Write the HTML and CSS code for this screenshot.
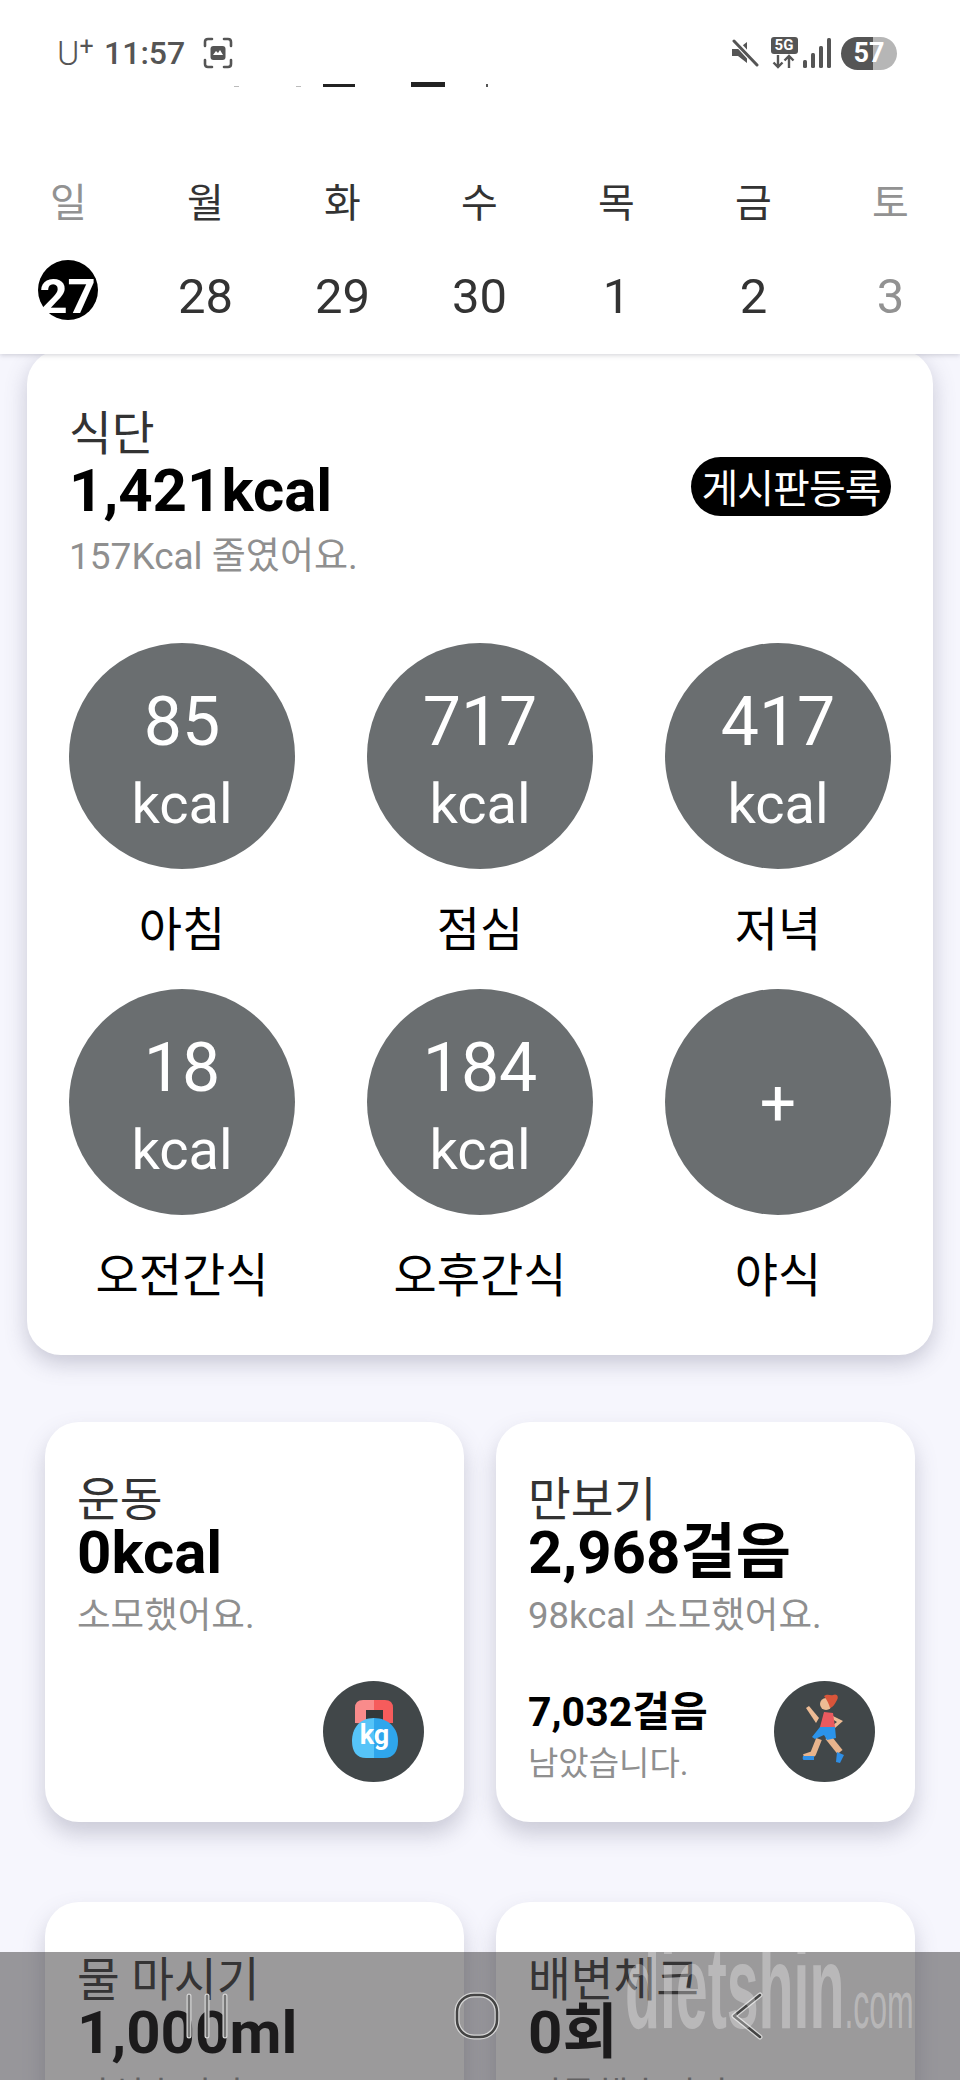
FILE: index.html
```html
<!DOCTYPE html>
<html lang="ko">
<head>
    <meta charset="UTF-8">
    <meta name="viewport" content="width=device-width, initial-scale=1.0">
    <title>식단</title>
    <link rel="stylesheet" href="styles.css">
</head>
<body>
    <header class="top">
        <div class="status-bar">
            <div class="status-left">
                <span class="carrier">U<sup>+</sup></span>
                <span class="clock">11:57</span>
                <svg class="shot-icon" width="30" height="32" viewBox="0 0 30 32">
                    <path d="M2 9V5q0-3 3-3h4M21 2h4q3 0 3 3v4M28 23v4q0 3-3 3h-4M9 30H5q-3 0-3-3v-4" fill="none" stroke="#555" stroke-width="2.6" stroke-linecap="round"/>
                    <rect x="7.5" y="9" width="15" height="14" rx="3" fill="#555"/>
                    <path d="M10 18l3-4 2 2 2-3 3 5z" fill="#fff"/>
                </svg>
            </div>
            <div class="status-right">
                <svg width="28" height="28" viewBox="0 0 28 28">
                    <path d="M1 10h6l9-7v21l-9-7H1z" fill="#555"/>
                    <path d="M4 2l22 24" stroke="#fff" stroke-width="6"/>
                    <path d="M3 2l23 24" stroke="#555" stroke-width="3" stroke-linecap="round"/>
                </svg>
                <div class="net">
                    <span class="net-label">5G</span>
                    <svg width="26" height="15" viewBox="0 0 26 15">
                        <path d="M7 1v12M2.500 8.500L7 13l4.500-4.500M18 14V2M13.500 6.500L18 2l4.500 4.500" fill="none" stroke="#555" stroke-width="2.400"/>
                    </svg>
                </div>
                <svg width="28" height="30" viewBox="0 0 28 30">
                    <rect x="0" y="22" width="4" height="8" rx="1.500" fill="#555"/>
                    <rect x="8" y="15" width="4" height="15" rx="1.500" fill="#555"/>
                    <rect x="16" y="8" width="4" height="22" rx="1.500" fill="#555"/>
                    <rect x="24" y="0" width="4" height="30" rx="1.500" fill="#555"/>
                </svg>
                <div class="battery">57</div>
            </div>
        </div>

        <!-- bottom edge of the scrolled away title -->
        <div class="cut-title">
            <span class="cut cut-dot"></span>
            <span class="cut cut-dot"></span>
            <span class="cut cut-a"></span>
            <span class="cut cut-b"></span>
            <span class="cut cut-dot"></span>
        </div>

        <div class="week">
            <span class="day off">일</span>
            <span class="day">월</span>
            <span class="day">화</span>
            <span class="day">수</span>
            <span class="day">목</span>
            <span class="day">금</span>
            <span class="day off">토</span>
            <span class="date"><span class="today">27</span></span>
            <span class="date">28</span>
            <span class="date">29</span>
            <span class="date">30</span>
            <span class="date">1</span>
            <span class="date">2</span>
            <span class="date off">3</span>
        </div>
    </header>

    <main>
        <section class="diet-card">
            <div class="diet-head">
                <div>
                    <div class="title">식단</div>
                    <div class="value">1,421kcal</div>
                    <div class="sub">157Kcal 줄였어요.</div>
                </div>
                <button class="board-btn">게시판등록</button>
            </div>
            <div class="meals">
                <div class="meal">
                    <div class="meal-circle"><span>85</span><span>kcal</span></div>
                    <div class="meal-name">아침</div>
                </div>
                <div class="meal">
                    <div class="meal-circle"><span>717</span><span>kcal</span></div>
                    <div class="meal-name">점심</div>
                </div>
                <div class="meal">
                    <div class="meal-circle"><span>417</span><span>kcal</span></div>
                    <div class="meal-name">저녁</div>
                </div>
                <div class="meal">
                    <div class="meal-circle"><span>18</span><span>kcal</span></div>
                    <div class="meal-name">오전간식</div>
                </div>
                <div class="meal">
                    <div class="meal-circle"><span>184</span><span>kcal</span></div>
                    <div class="meal-name">오후간식</div>
                </div>
                <div class="meal">
                    <div class="meal-circle"><span class="plus">+</span></div>
                    <div class="meal-name">야식</div>
                </div>
            </div>
        </section>

        <section class="small-cards">
            <div class="card">
                <div class="title">운동</div>
                <div class="value">0kcal</div>
                <div class="sub">소모했어요.</div>
                <div class="card-foot">
                    <div></div>
                    <div class="badge">
                        <svg width="101" height="101" viewBox="0 0 101 101">
                            <path d="M32 42V27q0-8 8-8h11v24z" fill="#f98b8b"/>
                            <path d="M51 19h11q8 0 8 8v15H51z" fill="#f65c5c"/>
                            <rect x="43" y="29" width="17" height="12" fill="#33383a"/>
                            <path d="M51 37C36 37 29 48 29 60c0 11 5 17 14 17h8z" fill="#56c4f8"/>
                            <path d="M51 37c15 0 24 11 24 23 0 11-5 17-14 17H51z" fill="#2fa6ec"/>
                            <text x="51.500" y="63" class="kg">kg</text>
                        </svg>
                    </div>
                </div>
            </div>
            <div class="card">
                <div class="title">만보기</div>
                <div class="value">2,968걸음</div>
                <div class="sub">98kcal 소모했어요.</div>
                <div class="card-foot">
                    <div class="left-block">
                        <div class="left-value">7,032걸음</div>
                        <div class="left-sub">남았습니다.</div>
                    </div>
                    <div class="badge">
                        <svg width="101" height="101" viewBox="0 0 101 101">
                            <path d="M45 58L39 73 30 76" fill="none" stroke="#e8b48c" stroke-width="6" stroke-linejoin="round"/>
                            <path d="M54 56L66 71" fill="none" stroke="#e8b48c" stroke-width="6.500"/>
                            <path d="M29 75h11v4H30q-2 0-1-4z" fill="#2f8fe6"/>
                            <path d="M63 71l7 3-4 8-4-1z" fill="#2f8fe6"/>
                            <path d="M32 27l3-2 10 12-3 5z" fill="#edbb94"/>
                            <path d="M59 35l10 5-8 7-2-3 4-3-5-3z" fill="#edbb94"/>
                            <circle cx="52" cy="23" r="6" fill="#edbb94"/>
                            <path d="M50 15c4-3 6 0 9-1 4-2 6 2 4 5-2 4-4 7-7 8-1-4-3-8-6-12z" fill="#d9553a"/>
                            <path d="M50 31l9 1 2 14-15 0z" fill="#ea5a5f"/>
                            <path d="M46 46h15l1 11-9 2-3-5-9 4-3-2z" fill="#2b93ea"/>
                        </svg>
                    </div>
                </div>
            </div>
            <div class="card">
                <div class="title">물 마시기</div>
                <div class="value">1,000ml</div>
                <div class="sub">마셨습니다.</div>
            </div>
            <div class="card">
                <div class="title">배변체크</div>
                <div class="value">0회</div>
                <div class="sub">기록했습니다.</div>
            </div>
        </section>
    </main>

    <nav class="nav-bar">
        <div class="watermark">dietshin<small>.com</small></div>
        <svg width="46" height="48" viewBox="0 0 46 48" class="nav-icon">
            <g fill="none" stroke="#d6d6d6" stroke-width="5" stroke-linecap="round">
                <path d="M5 4v40M23 4v40M41 4v40"/>
            </g>
            <g fill="none" stroke="#777" stroke-width="2.500" stroke-linecap="round">
                <path d="M5 4v40M23 4v40M41 4v40"/>
            </g>
        </svg>
        <svg width="46" height="48" viewBox="0 0 46 48" class="nav-icon">
            <rect x="3" y="3" width="40" height="42" rx="17" fill="none" stroke="#d6d6d6" stroke-width="5"/>
            <rect x="3" y="3" width="40" height="42" rx="17" fill="none" stroke="#444" stroke-width="2.500"/>
        </svg>
        <svg width="46" height="48" viewBox="0 0 46 48" class="nav-icon">
            <path d="M36 3L10 24l26 21" fill="none" stroke="#d6d6d6" stroke-width="5" stroke-linecap="round" stroke-linejoin="round"/>
            <path d="M36 3L10 24l26 21" fill="none" stroke="#444" stroke-width="2.500" stroke-linecap="round" stroke-linejoin="round"/>
        </svg>
    </nav>
</body>
</html>
```

FILE: styles.css
```css
* {
    box-sizing: border-box;
}

html, body {
    margin: 0;
    padding: 0;
}

body {
    position: relative;
    width: 960px;
    height: 2080px;
    overflow: hidden;
    background-color: #f6f6fd;
    font-family: Roboto, "Noto Sans CJK KR", sans-serif;
    color: #000000;
}

/* top area */
.top {
    position: relative;
    z-index: 2;
    height: 354px;
    background-color: #ffffff;
    box-shadow: 0 1px 5px rgba(70, 70, 90, 0.25);
}

.status-bar {
    display: flex;
    justify-content: space-between;
    align-items: center;
    position: absolute;
    left: 0;
    top: 36px;
    width: 960px;
    height: 34px;
    padding: 0 63px 0 57px;
    color: #555555;
}

.status-left {
    display: flex;
    align-items: center;
}

.carrier {
    width: 47px;
    font-size: 34px;
    line-height: 34px;
    font-weight: 300;
}

.carrier sup {
    font-size: 25px;
    line-height: 0;
    font-weight: 400;
    vertical-align: 10px;
}

.clock {
    font-size: 32px;
    line-height: 34px;
    font-weight: 500;
}

.shot-icon {
    margin-left: 18px;
}

.status-right {
    display: flex;
    align-items: center;
}

.status-right > svg:first-child {
    margin-right: 11px;
}

.net {
    display: flex;
    flex-direction: column;
    align-items: center;
    width: 28px;
    margin-right: 5px;
}

.net-label {
    display: block;
    width: 27px;
    height: 17px;
    border-radius: 3px;
    background-color: #555555;
    color: #ffffff;
    font-size: 15px;
    font-weight: 700;
    line-height: 17px;
    text-align: center;
}

.battery {
    width: 56px;
    height: 33px;
    margin-left: 10px;
    border-radius: 17px;
    background: linear-gradient(90deg, #555555 0, #555555 32px, #b6b6b6 32px);
    color: #ffffff;
    font-size: 27px;
    font-weight: 700;
    line-height: 33px;
    text-align: center;
}

.cut-title {
    position: absolute;
    left: 0;
    top: 82px;
    height: 5px;
}

.cut {
    display: block;
    position: absolute;
    bottom: 0;
    background-color: #222222;
}

.cut-dot {
    left: 234px;
    width: 5px;
    height: 1px;
    background-color: #bbbbbb;
}

.cut-dot:nth-child(2) {
    left: 296px;
}

.cut-dot:nth-child(5) {
    left: 486px;
    width: 2px;
    height: 3px;
    background-color: #555555;
}

.cut-a {
    left: 323px;
    width: 32px;
    height: 3px;
}

.cut-b {
    left: 411px;
    width: 34px;
    height: 5px;
}

.week {
    display: grid;
    grid-template-columns: repeat(7, 137px);
    grid-template-rows: 60px 60px;
    row-gap: 33px;
    position: absolute;
    left: 0;
    top: 174px;
    width: 960px;
    text-align: center;
    color: #333333;
}

.day {
    font-size: 40px;
    line-height: 60px;
}

.date {
    display: flex;
    justify-content: center;
    align-items: center;
    font-size: 49px;
    font-weight: 400;
    line-height: 60px;
}

.off {
    color: #929292;
}

.today {
    align-self: flex-start;
    width: 60px;
    height: 60px;
    margin-top: -7px;
    margin-left: -2px;
    border-radius: 50%;
    background-color: #000000;
    color: #ffffff;
    font-weight: 700;
    line-height: 74px;
}

/* diet card */
.diet-card {
    height: 1005px;
    margin: -4px 27px 0;
    padding: 53px 42px 0;
    border-radius: 34px;
    background-color: #ffffff;
    box-shadow: 0 8px 22px rgba(90, 90, 120, 0.3);
}

.diet-head {
    display: flex;
    justify-content: space-between;
    align-items: center;
    height: 180px;
}

.title {
    font-size: 46.5px;
    line-height: 54px;
    color: #333333;
}

.value {
    font-size: 60px;
    line-height: 60px;
    font-weight: 700;
}

.sub {
    margin-top: 13px;
    font-size: 37px;
    line-height: 46px;
    color: #8f8f8f;
}

.board-btn {
    width: 200px;
    height: 59px;
    margin-top: -14px;
    padding: 0;
    border: none;
    border-radius: 30px;
    background-color: #000000;
    color: #ffffff;
    font-family: Roboto, "Noto Sans CJK KR", sans-serif;
    font-size: 40px;
    letter-spacing: -1px;
}

.meals {
    display: grid;
    grid-template-columns: repeat(3, 226px);
    justify-content: space-between;
    margin-top: 60px;
}

.meal {
    height: 346px;
    text-align: center;
}

.meal-circle {
    display: flex;
    flex-direction: column;
    justify-content: center;
    align-items: center;
    width: 226px;
    height: 226px;
    padding-top: 14px;
    border-radius: 50%;
    background-color: #6a6e70;
    color: #ffffff;
    font-size: 68px;
    line-height: 82px;
}

.meal-circle span + span {
    font-size: 56px;
}

.meal-circle .plus {
    margin-top: -10px;
    font-size: 64px;
}

.meal-name {
    margin-top: 31px;
    font-size: 47px;
    line-height: 60px;
}

/* small cards */
.small-cards {
    display: grid;
    grid-template-columns: repeat(2, 419px);
    grid-auto-rows: 400px;
    column-gap: 32px;
    row-gap: 80px;
    margin-top: 67px;
    padding-left: 45px;
}

.card {
    padding: 51px 40px 0 32px;
    border-radius: 34px;
    background-color: #ffffff;
    box-shadow: 0 12px 22px rgba(90, 90, 120, 0.28);
}

.card .value {
    margin-top: -4px;
}

.card .sub {
    margin-top: 10px;
    font-size: 36.5px;
}

.card-foot {
    display: flex;
    justify-content: space-between;
    align-items: center;
    min-height: 112px;
    margin-top: 36px;
}

.badge {
    width: 101px;
    height: 101px;
    border-radius: 50%;
    background-color: #414749;
}

.badge svg {
    display: block;
}

.kg {
    font-family: Roboto, sans-serif;
    font-size: 27px;
    font-weight: 700;
    fill: #ffffff;
    text-anchor: middle;
}

.left-block {
    padding-top: 12px;
}

.left-value {
    font-size: 41px;
    line-height: 50px;
    font-weight: 700;
}

.left-sub {
    margin-top: 4px;
    font-size: 33px;
    line-height: 46px;
    color: #8f8f8f;
}

/* navigation over the content */
.nav-bar {
    position: absolute;
    left: 0;
    bottom: 0;
    z-index: 3;
    display: grid;
    grid-template-columns: repeat(3, 270px);
    justify-content: center;
    justify-items: center;
    align-items: start;
    width: 960px;
    height: 128px;
    padding-top: 40px;
    padding-right: 6px;
    overflow: hidden;
    background-color: rgba(56, 54, 56, 0.5);
}

.watermark {
    position: absolute;
    left: 625px;
    top: -30px;
    font-family: "Liberation Sans", sans-serif;
    font-size: 118px;
    line-height: 130px;
    font-weight: 700;
    white-space: nowrap;
    color: rgba(255, 255, 255, 0.3);
    transform: scaleX(0.485);
    transform-origin: left top;
}

.watermark small {
    font-size: 66px;
    font-weight: 400;
}
```
